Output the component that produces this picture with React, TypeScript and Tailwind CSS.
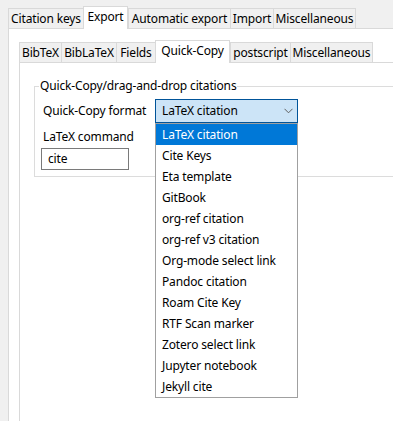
import React from "react";

const outerTabs = [
  { label: "Citation keys", w: 75 },
  { label: "Export", w: 45, sel: true },
  { label: "Automatic export", w: 102 },
  { label: "Import", w: 43 },
  { label: "Miscellaneous", w: 83, last: true },
];

const innerTabs = [
  { label: "BibTeX", w: 42 },
  { label: "BibLaTeX", w: 55 },
  { label: "Fields", w: 39 },
  { label: "Quick-Copy", w: 75, sel: true },
  { label: "postscript", w: 60 },
  { label: "Miscellaneous", w: 83, last: true },
];

const items = [
  "LaTeX citation",
  "Cite Keys",
  "Eta template",
  "GitBook",
  "org-ref citation",
  "org-ref v3 citation",
  "Org-mode select link",
  "Pandoc citation",
  "Roam Cite Key",
  "RTF Scan marker",
  "Zotero select link",
  "Jupyter notebook",
  "Jekyll cite",
];

type Tab = { label: string; w: number; sel?: boolean; last?: boolean };

function TabStrip({ tabs }: { tabs: Tab[] }) {
  return (
    <div className="flex items-end">
      {tabs.map((t) =>
        t.sel ? (
          <div
            key={t.label}
            style={{ width: t.w }}
            className="relative z-10 -mb-px h-[23px] border-l border-t border-r border-[#d9d9d9] bg-white flex items-start justify-center pt-[1px] leading-[18px] whitespace-nowrap"
          >
            {t.label}
          </div>
        ) : (
          <div
            key={t.label}
            style={{ width: t.w }}
            className={
              "h-[20px] border-l border-t border-[#d9d9d9] bg-[#f0f0f0] flex items-center justify-center leading-[18px] whitespace-nowrap " +
              (t.last ? "border-r" : "")
            }
          >
            {t.label}
          </div>
        )
      )}
    </div>
  );
}

export default function App() {
  return (
    <div
      className="relative w-[393px] h-[421px] overflow-hidden bg-[#f0f0f0] text-[12px] tracking-[-0.15px] text-black flex flex-col"
      style={{ fontFamily: '"Noto Sans", "Open Sans", sans-serif' }}
    >
      <div className="h-[28px] pl-[8px] flex items-end">
        <TabStrip tabs={outerTabs} />
      </div>
      <div className="ml-[8px] flex-1 w-[420px] border-l border-t border-[#d9d9d9] bg-white pl-[10px] pt-[11px] flex flex-col">
        <div className="h-[22px] flex items-end">
          <TabStrip tabs={innerTabs} />
        </div>
        <div className="flex-1 border-l border-t border-[#d9d9d9] bg-white pl-[14px] pt-[16px]">
          <fieldset className="w-[420px] border border-[#dcdcdc] p-0 m-0">
            <legend className="ml-[4px] px-[1px] leading-[14px]">
              Quick-Copy/drag-and-drop citations
            </legend>
            <div className="pl-[8px] pt-[6px] pb-[6px]">
              <div className="flex items-center h-[24px]">
                <div className="w-[112px]">Quick-Copy format</div>
                <div className="w-[143px] h-[24px] border border-[#005499] bg-[#cce4f7] flex items-center justify-between pl-[6px] pr-[4px]">
                  <span>LaTeX citation</span>
                  <svg width="9" height="6" viewBox="0 0 9 6">
                    <path d="M0.5 0.8 L4.5 4.8 L8.5 0.8" fill="none" stroke="#606060" strokeWidth="1" />
                  </svg>
                </div>
              </div>
              <div className="mt-[6px] h-[16px] leading-[16px]">LaTeX command</div>
              <div className="mt-[3px] -ml-[2px] w-[88px] h-[22px] border border-[#7a7a7a] pl-[6px] flex items-center">
                cite
              </div>
            </div>
          </fieldset>
        </div>
      </div>

      <div className="absolute left-[155px] top-[123px] w-[143px] border border-[#a0a0a0] bg-white">
        {items.map((it, i) => (
          <div
            key={it}
            className={
              "h-[21px] leading-[21px] pl-[6px] " +
              (i === 0 ? "bg-[#0078d7] text-white" : "text-black")
            }
          >
            {it}
          </div>
        ))}
      </div>
    </div>
  );
}
